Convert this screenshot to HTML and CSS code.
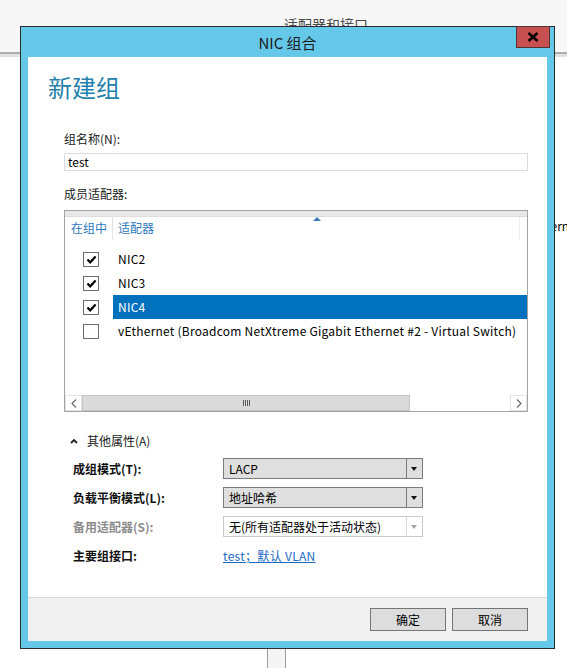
FILE: index.html
```html
<!DOCTYPE html>
<html lang="zh-CN">
<head>
<meta charset="utf-8">
<title>NIC 组合</title>
<link rel="stylesheet" href="styles.css">
</head>
<body>
<div class="desktop">
  <div class="bg-top"><span class="bg-title">适配器和接口</span></div>
  <div class="bg-line"></div>
  <div class="bg-body">
    <div class="bg-row">Etherne</div>
    <div class="bg-splitter"></div>
  </div>
</div>

<div class="dialog">
  <div class="titlebar">
    <span class="title">NIC 组合</span>
    <button class="close" type="button" aria-label="关闭">
      <svg width="12" height="10" viewBox="0 0 12 10"><path d="M1.5 1 L10.5 9 M10.5 1 L1.5 9" stroke="#000" stroke-width="2.6" fill="none"/></svg>
    </button>
  </div>

  <div class="panel">
    <h1 class="heading">新建组</h1>
    <div class="form">
      <div class="field-label">组名称(N):</div>
      <div class="textbox">test</div>
      <div class="field-label members">成员适配器:</div>

      <div class="listbox">
        <div class="list-strip"></div>
        <div class="list-head">
          <div class="col-in">在组中</div>
          <div class="col-name">适配器<span class="sort"></span></div>
          <div class="col-rest"></div>
        </div>
        <div class="list-rows">
          <div class="row">
            <span class="cell-check"><span class="check"><svg width="13" height="13" viewBox="0 0 13 13"><path d="M2.5 6.5 L5.2 9.3 L10.6 3.4" stroke="#000" stroke-width="2.2" fill="none"/></svg></span></span>
            <span class="cell-name">NIC2</span>
          </div>
          <div class="row">
            <span class="cell-check"><span class="check"><svg width="13" height="13" viewBox="0 0 13 13"><path d="M2.5 6.5 L5.2 9.3 L10.6 3.4" stroke="#000" stroke-width="2.2" fill="none"/></svg></span></span>
            <span class="cell-name">NIC3</span>
          </div>
          <div class="row selected">
            <span class="cell-check"><span class="check"><svg width="13" height="13" viewBox="0 0 13 13"><path d="M2.5 6.5 L5.2 9.3 L10.6 3.4" stroke="#000" stroke-width="2.2" fill="none"/></svg></span></span>
            <span class="cell-name">NIC4</span>
          </div>
          <div class="row">
            <span class="cell-check"><span class="check"></span></span>
            <span class="cell-name">vEthernet (Broadcom NetXtreme Gigabit Ethernet #2 - Virtual Switch)</span>
          </div>
        </div>
        <div class="hscroll">
          <span class="sb-btn"><svg width="6" height="9" viewBox="0 0 6 9"><path d="M5 0.5 L1 4.5 L5 8.5" stroke="#6a6a6a" stroke-width="1.2" fill="none"/></svg></span>
          <span class="sb-thumb"><span class="grip"></span></span>
          <span class="sb-track"></span>
          <span class="sb-btn"><svg width="6" height="9" viewBox="0 0 6 9"><path d="M1 0.5 L5 4.5 L1 8.5" stroke="#6a6a6a" stroke-width="1.2" fill="none"/></svg></span>
        </div>
      </div>

      <div class="props-toggle">
        <svg class="caret" width="8" height="6" viewBox="0 0 8 6"><path d="M1 5 L4 2 L7 5" stroke="#222" stroke-width="1.8" fill="none"/></svg>
        <span>其他属性(A)</span>
      </div>

      <div class="props">
        <div class="prop-label">成组模式(T):</div>
        <div class="combo"><span class="combo-text">LACP</span><span class="combo-arrow"></span></div>

        <div class="prop-label">负载平衡模式(L):</div>
        <div class="combo"><span class="combo-text">地址哈希</span><span class="combo-arrow"></span></div>

        <div class="prop-label disabled">备用适配器(S):</div>
        <div class="combo disabled"><span class="combo-text">无(所有适配器处于活动状态)</span><span class="combo-arrow"></span></div>

        <div class="prop-label">主要组接口:</div>
        <div class="link-cell"><a class="link" href="#">test；默认 VLAN</a></div>
      </div>
    </div>
  </div>

  <div class="footer">
    <button class="btn" type="button">确定</button>
    <button class="btn" type="button">取消</button>
  </div>
</div>
</body>
</html>
```

FILE: styles.css
```css
* { box-sizing: border-box; }

html, body {
  margin: 0;
  padding: 0;
}

body {
  width: 567px;
  height: 668px;
  overflow: hidden;
  position: relative;
  background: #ffffff;
  font-family: "Noto Sans CJK SC", "Noto Sans", sans-serif;
  font-size: 12px;
  color: #000;
}

/* ---------- background window ---------- */
.desktop {
  height: 668px;
  display: flex;
  flex-direction: column;
}

.bg-top {
  flex: none;
  height: 52px;
  background: #f7f7f7;
  padding: 14px 0 0 284px;
}

.bg-title {
  font-size: 14px;
  line-height: 20px;
  color: #4a4a4a;
}

.bg-line {
  flex: none;
  height: 5px;
  border-top: 2px solid #adadad;
  background: #e2e2e2;
}

.bg-body {
  flex: 1;
  display: flex;
  flex-direction: column;
}

.bg-row {
  margin-top: 161px;
  padding-left: 532px;
  line-height: 16px;
  white-space: nowrap;
}

.bg-splitter {
  margin-top: auto;
  margin-left: 267px;
  width: 19px;
  height: 60px;
  background: #f5f5f5;
  border-left: 1px solid #9c9c9c;
  border-right: 1px solid #9c9c9c;
}

/* ---------- dialog ---------- */
.dialog {
  position: absolute;
  left: 20px;
  top: 26px;
  width: 535px;
  height: 623px;
  border: 1px solid #2c2c2e;
  background: #65c8e9;
  display: flex;
  flex-direction: column;
}

.titlebar {
  position: relative;
  height: 30px;
  flex: none;
  display: flex;
  align-items: center;
  justify-content: center;
}

.title {
  font-size: 15px;
  line-height: 20px;
  color: #1a1a1a;
  padding-top: 1px;
}

.close {
  position: absolute;
  top: -1px;
  right: 4px;
  width: 34px;
  height: 22px;
  padding: 0;
  margin: 0;
  border: 1px solid #553333;
  background: #c75050;
  display: flex;
  align-items: center;
  justify-content: center;
}

.panel {
  flex: none;
  height: 540px;
  margin: 0 7px;
  background: #ffffff;
  padding: 14px 19px 0 20px;
}

.heading {
  margin: 0;
  font-size: 24px;
  line-height: 32px;
  font-weight: normal;
  color: #237fab;
}

.form {
  padding-left: 16px;
  display: flex;
  flex-direction: column;
}

.field-label {
  margin-top: 28px;
  line-height: 16px;
  color: #1a1a1a;
}

.field-label.members {
  margin-top: 15px;
}

.textbox {
  margin-top: 6px;
  height: 18px;
  border: 1px solid #dcdce4;
  padding-left: 3px;
  line-height: 16px;
}

/* ---------- list ---------- */
.listbox {
  margin-top: 8px;
  height: 202px;
  border: 1px solid #a3a3a3;
  display: flex;
  flex-direction: column;
}

.list-strip {
  flex: none;
  height: 6px;
  background: #e8e8e8;
  border-bottom: 1px solid #dedede;
}

.list-head {
  flex: none;
  height: 23px;
  display: flex;
  color: #2f78bd;
  line-height: 22px;
}

.col-in {
  width: 48px;
  padding-left: 6px;
  border-right: 1px solid #e4e4e4;
}

.col-name {
  position: relative;
  width: 407px;
  padding-left: 5px;
  border-right: 1px solid #ececec;
}

.sort {
  position: absolute;
  top: 0;
  left: 200px;
  width: 0;
  height: 0;
  border-left: 4px solid transparent;
  border-right: 4px solid transparent;
  border-bottom: 4px solid #3d7ab5;
}

.col-rest { flex: 1; }

.list-rows {
  flex: 1;
  padding-top: 7px;
}

.row {
  height: 24px;
  display: flex;
  align-items: stretch;
}

.cell-check {
  width: 48px;
  flex: none;
  padding-left: 18px;
  display: flex;
  align-items: center;
}

.check {
  width: 16px;
  height: 15px;
  border: 1px solid #6e6e6e;
  background: #fff;
  display: flex;
  align-items: center;
  justify-content: center;
}

.cell-name {
  flex: 1;
  padding-left: 5px;
  line-height: 24px;
  letter-spacing: 0.24px;
  white-space: nowrap;
  overflow: hidden;
}

.row.selected .cell-name {
  background: #0071bc;
  color: #fff;
}

.hscroll {
  flex: none;
  height: 16px;
  display: flex;
}

.sb-btn {
  width: 17px;
  flex: none;
  border: 1px solid #e3e3e3;
  background: #fff;
  display: flex;
  align-items: center;
  justify-content: center;
}

.sb-thumb {
  width: 328px;
  flex: none;
  background: #dadada;
  border: 1px solid #c4c4c4;
  display: flex;
  align-items: center;
  justify-content: center;
}

.grip {
  width: 7px;
  height: 6px;
  background: repeating-linear-gradient(to right, #5e5e5e 0 1px, transparent 1px 2px);
}

.sb-track {
  flex: 1;
  background: #fff;
}

/* ---------- properties ---------- */
.props-toggle {
  margin-top: 21px;
  line-height: 16px;
  display: flex;
  align-items: center;
  color: #1a1a1a;
}

.caret {
  margin-left: 6px;
  margin-right: 9px;
}

.props {
  margin-top: 9px;
  display: grid;
  grid-template-columns: 150px 200px;
  grid-auto-rows: 21px;
  row-gap: 8px;
  padding-left: 9px;
}

.prop-label {
  font-weight: bold;
  line-height: 21px;
  color: #111;
}

.prop-label.disabled {
  color: #8c8c8c;
}

.combo {
  display: flex;
  border: 1px solid #7c7c7c;
  background: #dfdfdf;
}

.combo-text {
  flex: 1;
  padding-left: 5px;
  line-height: 19px;
  white-space: nowrap;
}

.combo-arrow {
  width: 16px;
  flex: none;
  border-left: 1px solid #7c7c7c;
  position: relative;
}

.combo-arrow::after {
  content: "";
  position: absolute;
  left: 4px;
  top: 8px;
  border-left: 3.5px solid transparent;
  border-right: 3.5px solid transparent;
  border-top: 4px solid #111;
}

.combo.disabled {
  background: #fff;
  border-color: #cacaca;
}

.combo.disabled .combo-arrow {
  border-left-color: #dadada;
}

.combo.disabled .combo-arrow::after {
  border-top-color: #a4a4a4;
}

.link-cell {
  line-height: 21px;
  white-space: nowrap;
}

.link {
  color: #1c6ac6;
  text-decoration: underline;
  letter-spacing: 0.3px;
}

/* ---------- footer ---------- */
.footer {
  flex: none;
  height: 44px;
  margin: 0 7px;
  border-top: 1px solid #d8d8d8;
  background: #f0f0f0;
  display: flex;
  justify-content: flex-end;
  align-items: flex-start;
  gap: 6px;
  padding: 10px 19px 0 0;
}

.btn {
  width: 76px;
  height: 23px;
  margin: 0;
  padding: 0;
  border: 1px solid #747474;
  background: #dddddd;
  font-family: "Noto Sans CJK SC", sans-serif;
  font-size: 12px;
  color: #000;
}
```
